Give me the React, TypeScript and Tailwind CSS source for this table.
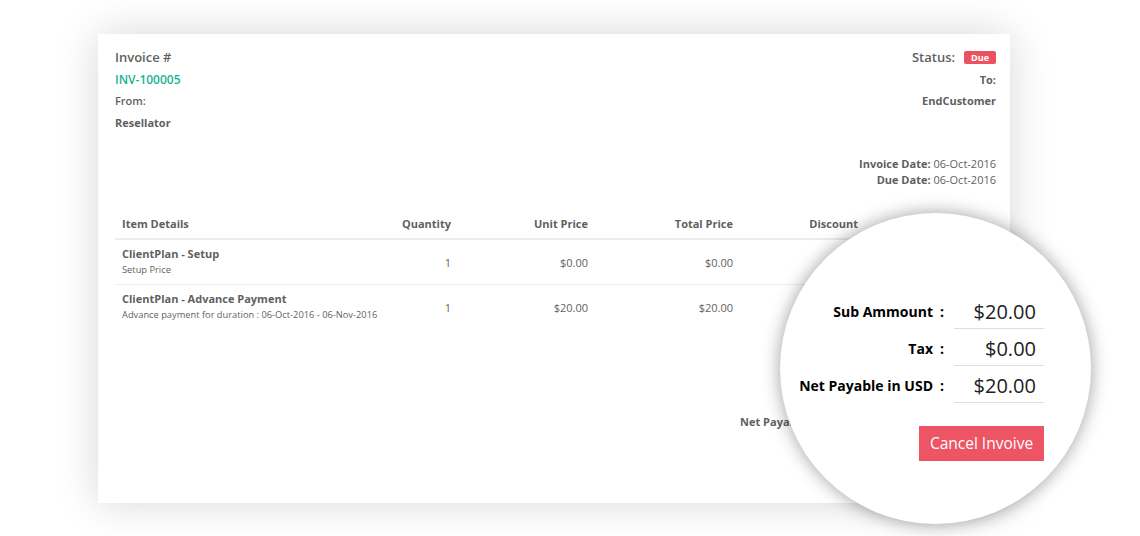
const items = [
  {
    title: "ClientPlan - Setup",
    sub: "Setup Price",
    qty: "1",
    unit: "$0.00",
    total: "$0.00",
  },
  {
    title: "ClientPlan - Advance Payment",
    sub: "Advance payment for duration : 06-Oct-2016 - 06-Nov-2016",
    qty: "1",
    unit: "$20.00",
    total: "$20.00",
  },
];

const summary = [
  { label: "Sub Ammount", value: "$20.00" },
  { label: "Tax", value: "$0.00" },
  { label: "Net Payable in USD", value: "$20.00" },
];

const cols = "grid grid-cols-[265px_78px_137px_145px_125px_131px]";

const App = () => {
  return (
    <div className="relative w-[1140px] h-[536px] bg-white font-['Open_Sans',sans-serif] text-[#5f5f5f] overflow-hidden">
      <div className="pt-[34px] pl-[98px]">
        <div className="w-[912px] h-[469px] bg-white shadow-[0_0_40px_rgba(0,0,0,0.16)] pl-[17px] pr-[14px] pt-[13px]">
          <header className="flex justify-between">
            <div className="flex flex-col">
              <span className="leading-[21.5px] text-[13px] font-semibold">Invoice #</span>
              <span className="leading-[21.5px] text-[12px] font-semibold text-[#1bb394]">INV-100005</span>
              <span className="leading-[21.5px] text-[11px] font-semibold">From:</span>
              <span className="leading-[21.5px] text-[11px] font-bold">Resellator</span>
            </div>
            <div className="flex flex-col items-end">
              <div className="h-[21.5px] flex items-center gap-[9px]">
                <span className="text-[13px] font-semibold">Status:</span>
                <span className="bg-[#ec5160] text-white text-[9px] font-bold leading-[13px] px-[7px] rounded-[2px]">
                  Due
                </span>
              </div>
              <span className="leading-[21.5px] text-[11px] font-bold">To:</span>
              <span className="leading-[21.5px] text-[11px] font-bold">EndCustomer</span>
              <div className="mt-[44px] flex flex-col items-end text-[11px] leading-[16px]">
                <span>
                  <b className="font-bold">Invoice Date:</b> 06-Oct-2016
                </span>
                <span>
                  <b className="font-bold">Due Date:</b> 06-Oct-2016
                </span>
              </div>
            </div>
          </header>

          <main className="mt-[24px] text-[11px]">
            <div className={`${cols} h-[28px] items-center font-bold border-b-2 border-[#ececec]`}>
              <span className="px-[7px]">Item Details</span>
              <span className="px-[7px] text-right">Quantity</span>
              <span className="px-[7px] text-right">Unit Price</span>
              <span className="px-[7px] text-right">Total Price</span>
              <span className="px-[7px] text-right">Discount</span>
              <span />
            </div>
            {items.map((item, i) => (
              <div
                key={item.title}
                className={`${cols} h-[45px] items-center ${i === 0 ? "border-b border-[#ececec]" : ""}`}
              >
                <div className="px-[7px] flex flex-col leading-[16px]">
                  <span className="font-bold">{item.title}</span>
                  <span className="text-[9.3px] whitespace-nowrap">{item.sub}</span>
                </div>
                <span className="px-[7px] pt-[3px] text-right">{item.qty}</span>
                <span className="px-[7px] pt-[3px] text-right">{item.unit}</span>
                <span className="px-[7px] pt-[3px] text-right">{item.total}</span>
                <span />
                <span />
              </div>
            ))}

            <div className="mt-[84px] pl-[625px] font-bold leading-[16px]">
              Net Payable in USD :
            </div>
          </main>
        </div>
      </div>

      {/* magnifier over the totals */}
      <div className="absolute left-[780px] top-[213px] w-[311px] h-[311px] rounded-full bg-white shadow-[0_0_18px_rgba(0,0,0,0.38)] flex flex-col items-end pt-[79px] pr-[47px]">
        {summary.map(row => (
          <div key={row.label} className="flex items-center h-[37px]">
            <span className="text-[14px] font-bold text-black pr-[10px] pt-[2px] whitespace-nowrap">
              {row.label}
              <span className="ml-[7px]">:</span>
            </span>
            <span className="w-[90px] h-full flex items-center justify-end pr-[8px] pt-[3px] border-b border-[#dedede] text-[20px] text-[#222]">
              {row.value}
            </span>
          </div>
        ))}
        <button className="mt-[23px] w-[125px] h-[35px] bg-[#ed5565] text-white text-[15.5px]">
          Cancel Invoive
        </button>
      </div>
    </div>
  );
};

export default App;
